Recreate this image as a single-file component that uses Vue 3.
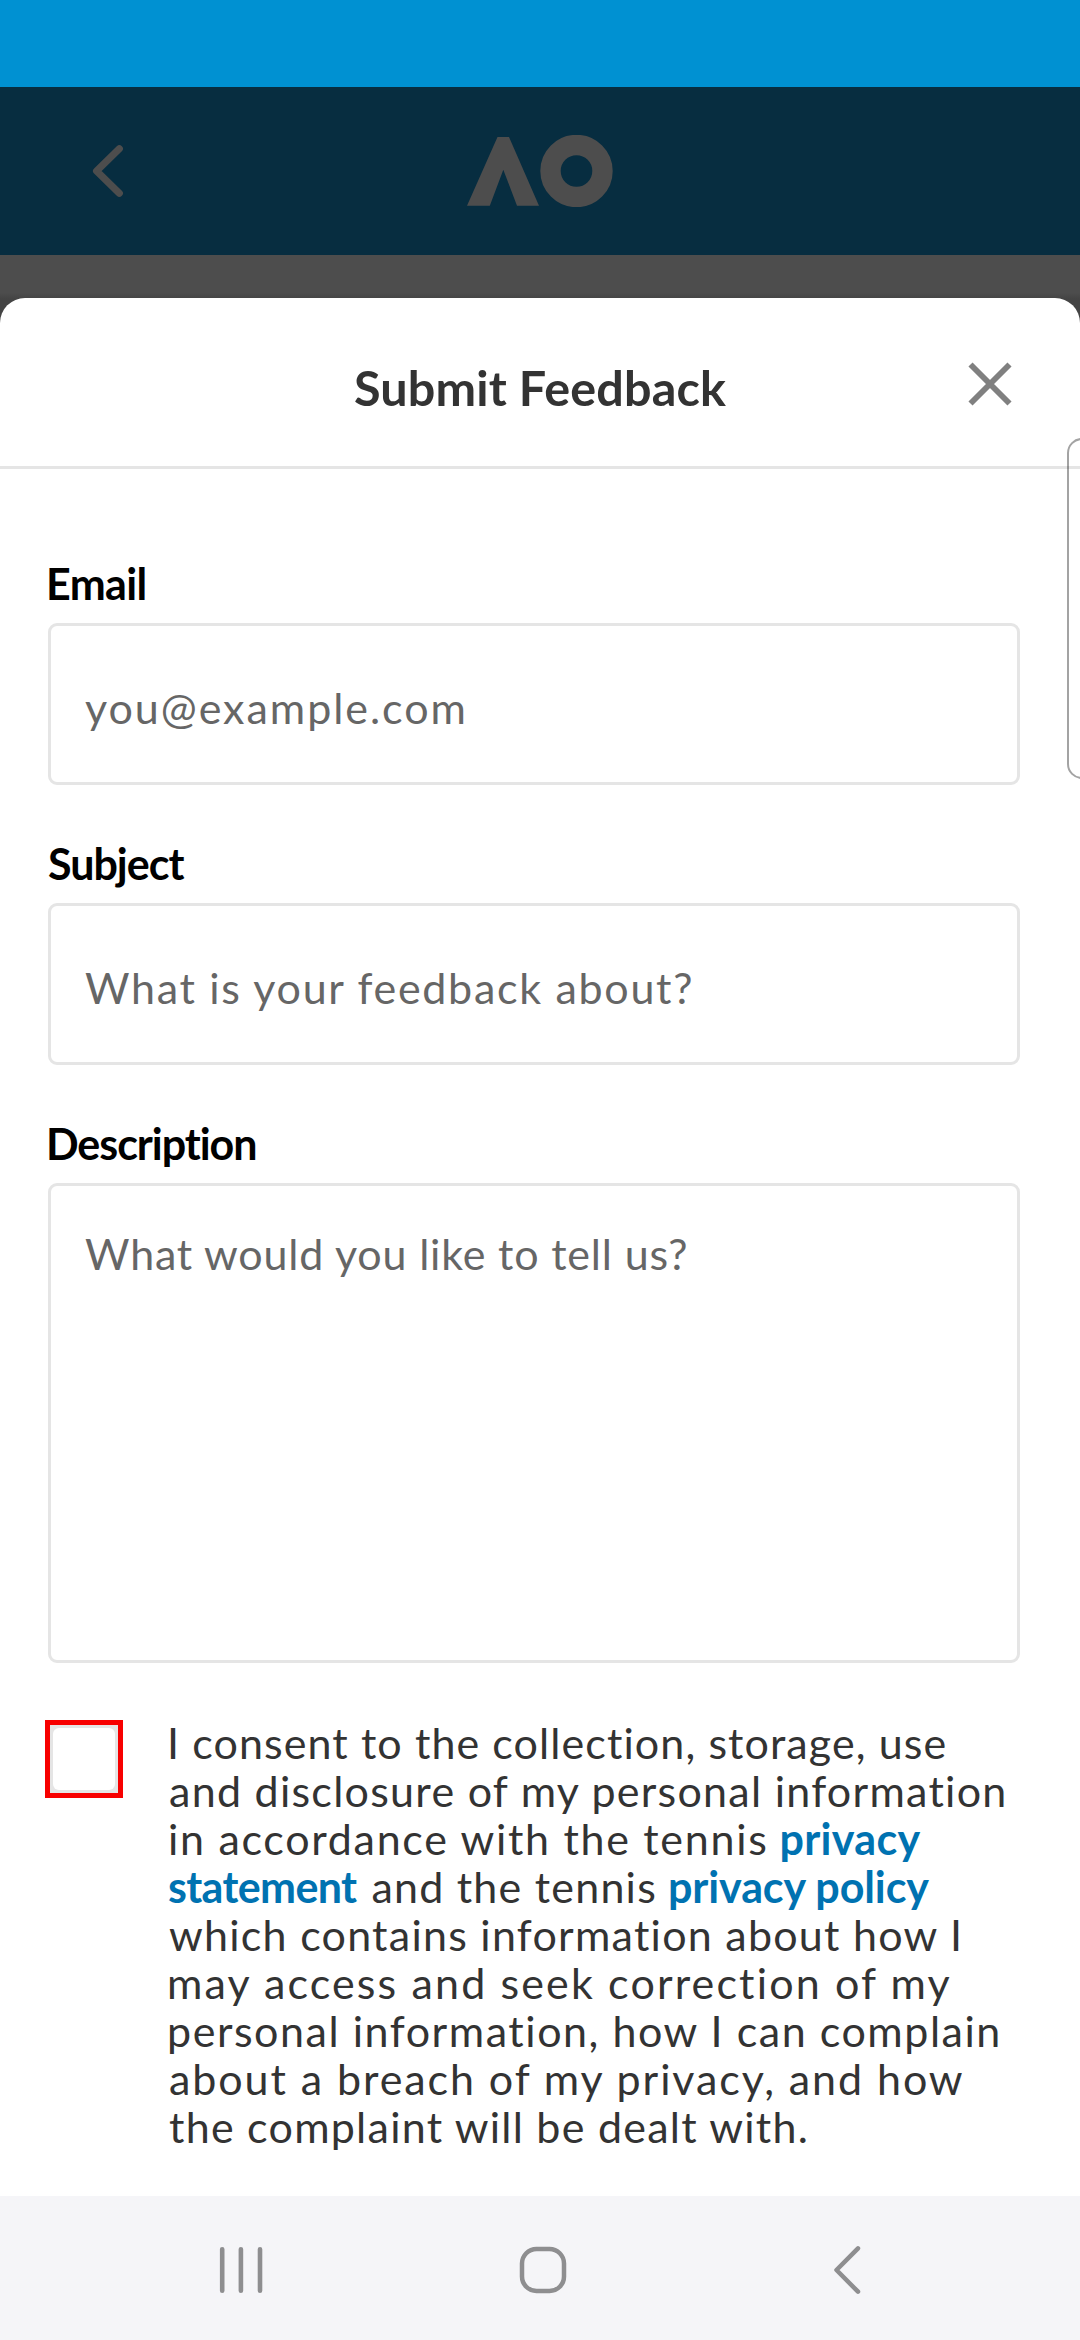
<script setup>
const fields = [
  { id: 'email', label: 'Email', labelLs: -0.6, labelX: -2, hint: 'you@example.com', ls: 1.96, x: -1 },
  { id: 'subject', label: 'Subject', labelLs: -1, labelX: 0, hint: 'What is your feedback about?', ls: 1.7, x: -1 },
  { id: 'description', label: 'Description', labelLs: -1.05, labelX: -2, hint: 'What would you like to tell us?', ls: 0.82, x: -1, tall: true },
]

// Consent copy, line by line, with the tracking of each run
const lines = [
  [{ t: 'I consent to the collection, storage, use', ls: 1.09, x: -2 }],
  [{ t: 'and disclosure of my personal information', ls: 1.27 }],
  [{ t: 'in accordance with the tennis', ls: 1.7, x: -1 }, { t: 'privacy', ls: 0.32, link: true }],
  [{ t: 'statement', ls: -0.64, link: true, x: -1 }, { t: 'and the tennis', ls: 1.22, x: 4 }, { t: 'privacy policy', ls: -0.1, link: true }],
  [{ t: 'which contains information about how I', ls: 1.25 }],
  [{ t: 'may access and seek correction of my', ls: 2.14, x: -2 }],
  [{ t: 'personal information, how I can complain', ls: 1.54, x: -2 }],
  [{ t: 'about a breach of my privacy, and how', ls: 1.92 }],
  [{ t: 'the complaint will be dealt with.', ls: 1.25 }],
]

const run = (ls, x = 0) => ({ letterSpacing: `${ls}px`, marginLeft: `${x}px` })
</script>

<template>
  <div class="screen">
    <div class="status"></div>
    <header class="bar">
      <svg class="back" width="34" height="56" viewBox="0 0 34 56">
        <path d="M28.300 5.800 5.600 28l22.700 22.200" fill="none" stroke="#4d4d4d" stroke-width="7.200" stroke-linecap="round" stroke-linejoin="round" />
      </svg>
      <svg class="logo" width="146" height="72" viewBox="0 0 146 72">
        <path d="M0 70.700 30.500 2H42l30 68.700H50L36.300 34.700 22.800 70.700Z" fill="#4d4d4d" />
        <circle cx="109.500" cy="36" r="26" fill="none" stroke="#4d4d4d" stroke-width="20.400" />
      </svg>
    </header>
    <div class="backdrop">
      <main class="sheet">
        <div class="head">
          <h1>Submit Feedback</h1>
          <svg class="close" width="44" height="44" viewBox="0 0 44 44">
            <path d="M2.500 2.500l39 39M41.500 2.500l-39 39" stroke="#808080" stroke-width="5.800" />
          </svg>
        </div>
        <form class="form">
          <div v-for="f in fields" :key="f.id" class="field">
            <label><span :style="run(f.labelLs, f.labelX)">{{ f.label }}</span></label>
            <div class="box" :class="{ tall: f.tall }"><span :style="run(f.ls, f.x)">{{ f.hint }}</span></div>
          </div>
          <div class="consent">
            <div class="check"><div class="tick"></div></div>
            <div class="copy">
              <div v-for="(l, i) in lines" :key="i" class="line">
                <component :is="s.link ? 'a' : 'span'" v-for="s in l" :key="s.t" :style="run(s.ls, s.x)">{{ s.t }}</component>
              </div>
            </div>
          </div>
        </form>
        <div class="edge"></div>
      </main>
    </div>
    <nav class="nav">
      <svg width="44" height="50" viewBox="0 0 44 50">
        <path d="M3.200 4.200v41.600M21.900 4.200v41.600M41 4.200v41.600" stroke="#8e8e90" stroke-width="4.600" stroke-linecap="round" />
      </svg>
      <svg class="home" width="50" height="50" viewBox="0 0 50 50">
        <rect x="4" y="4" width="42" height="42" rx="14.500" fill="none" stroke="#8e8e90" stroke-width="4.500" />
      </svg>
      <svg class="prev" width="32" height="52" viewBox="0 0 32 52">
        <path d="M27 4.300 5.500 26 27 47.700" fill="none" stroke="#8e8e90" stroke-width="4.500" stroke-linecap="round" stroke-linejoin="round" />
      </svg>
    </nav>
  </div>
</template>

<style>
body { margin: 0; }
</style>

<style scoped>
.screen {
  width: 1080px;
  height: 2340px;
  display: flex;
  flex-direction: column;
  overflow: hidden;
  background: #fff;
  font: 400 43px/48px Lato, "Open Sans", sans-serif;
  font-variant-ligatures: none;
}
svg { display: block; }
.status { flex: none; height: 87px; background: #0091d2; }
.bar {
  flex: none;
  box-sizing: border-box;
  height: 168px;
  display: grid;
  grid-template-columns: 467px 146px 1fr;
  align-items: center;
  background: #072d40;
}
.back { margin-left: 91px; }
.backdrop {
  flex: 1;
  padding-top: 43px;
  display: flex;
  background: linear-gradient(#4d4d4d 0, #4d4d4d 38px, #444 44px);
}
.sheet {
  position: relative;
  flex: 1;
  overflow: hidden;
  background: #fff;
  border-radius: 25px 25px 0 0;
}
.head {
  box-sizing: border-box;
  height: 171px;
  padding: 10px 68px 0 112px;
  border-bottom: 3px solid #e5e5e5;
  display: flex;
  align-items: center;
}
h1 {
  flex: 1;
  margin: 0;
  text-align: center;
  font-size: 48.5px;
  line-height: 56px;
  font-weight: 700;
  letter-spacing: 0.15px;
  color: #333;
}
.close { margin-top: -6px; }
.form { padding: 91px 60px 0 48px; }
label { display: block; font-weight: 700; color: #000; }
.box {
  box-sizing: border-box;
  height: 162px;
  margin: 15px 0 55px;
  padding: 58px 35px 0;
  border: 3px solid #e5e5e5;
  border-radius: 9px;
  color: #666;
}
.box.tall { height: 480px; padding-top: 44px; margin-bottom: 56px; }
.consent { display: flex; margin-left: -3px; }
.check {
  flex: none;
  box-sizing: border-box;
  width: 78px;
  height: 78px;
  margin-top: 1px;
  border: 5px solid #f80000;
  background: #e5e5e5;
  padding: 3px;
}
.tick { height: 100%; border-radius: 6px; background: #fff; }
.copy { margin-left: 46px; color: #333; }
.line { display: flex; gap: 11px; white-space: nowrap; }
a { font-weight: 700; color: #0072b1; }
/* Side panel handle peeking in from the right edge */
.edge {
  position: absolute;
  top: 140px;
  right: -20px;
  box-sizing: border-box;
  width: 33px;
  height: 341px;
  border: 2px solid rgba(0, 0, 0, 0.36);
  border-radius: 15px;
}
.nav {
  flex: none;
  box-sizing: border-box;
  height: 144px;
  padding: 4px 217px 0 219px;
  display: flex;
  justify-content: space-between;
  align-items: center;
  background: #f5f5f8;
}
.home { margin-right: 8px; }
</style>
